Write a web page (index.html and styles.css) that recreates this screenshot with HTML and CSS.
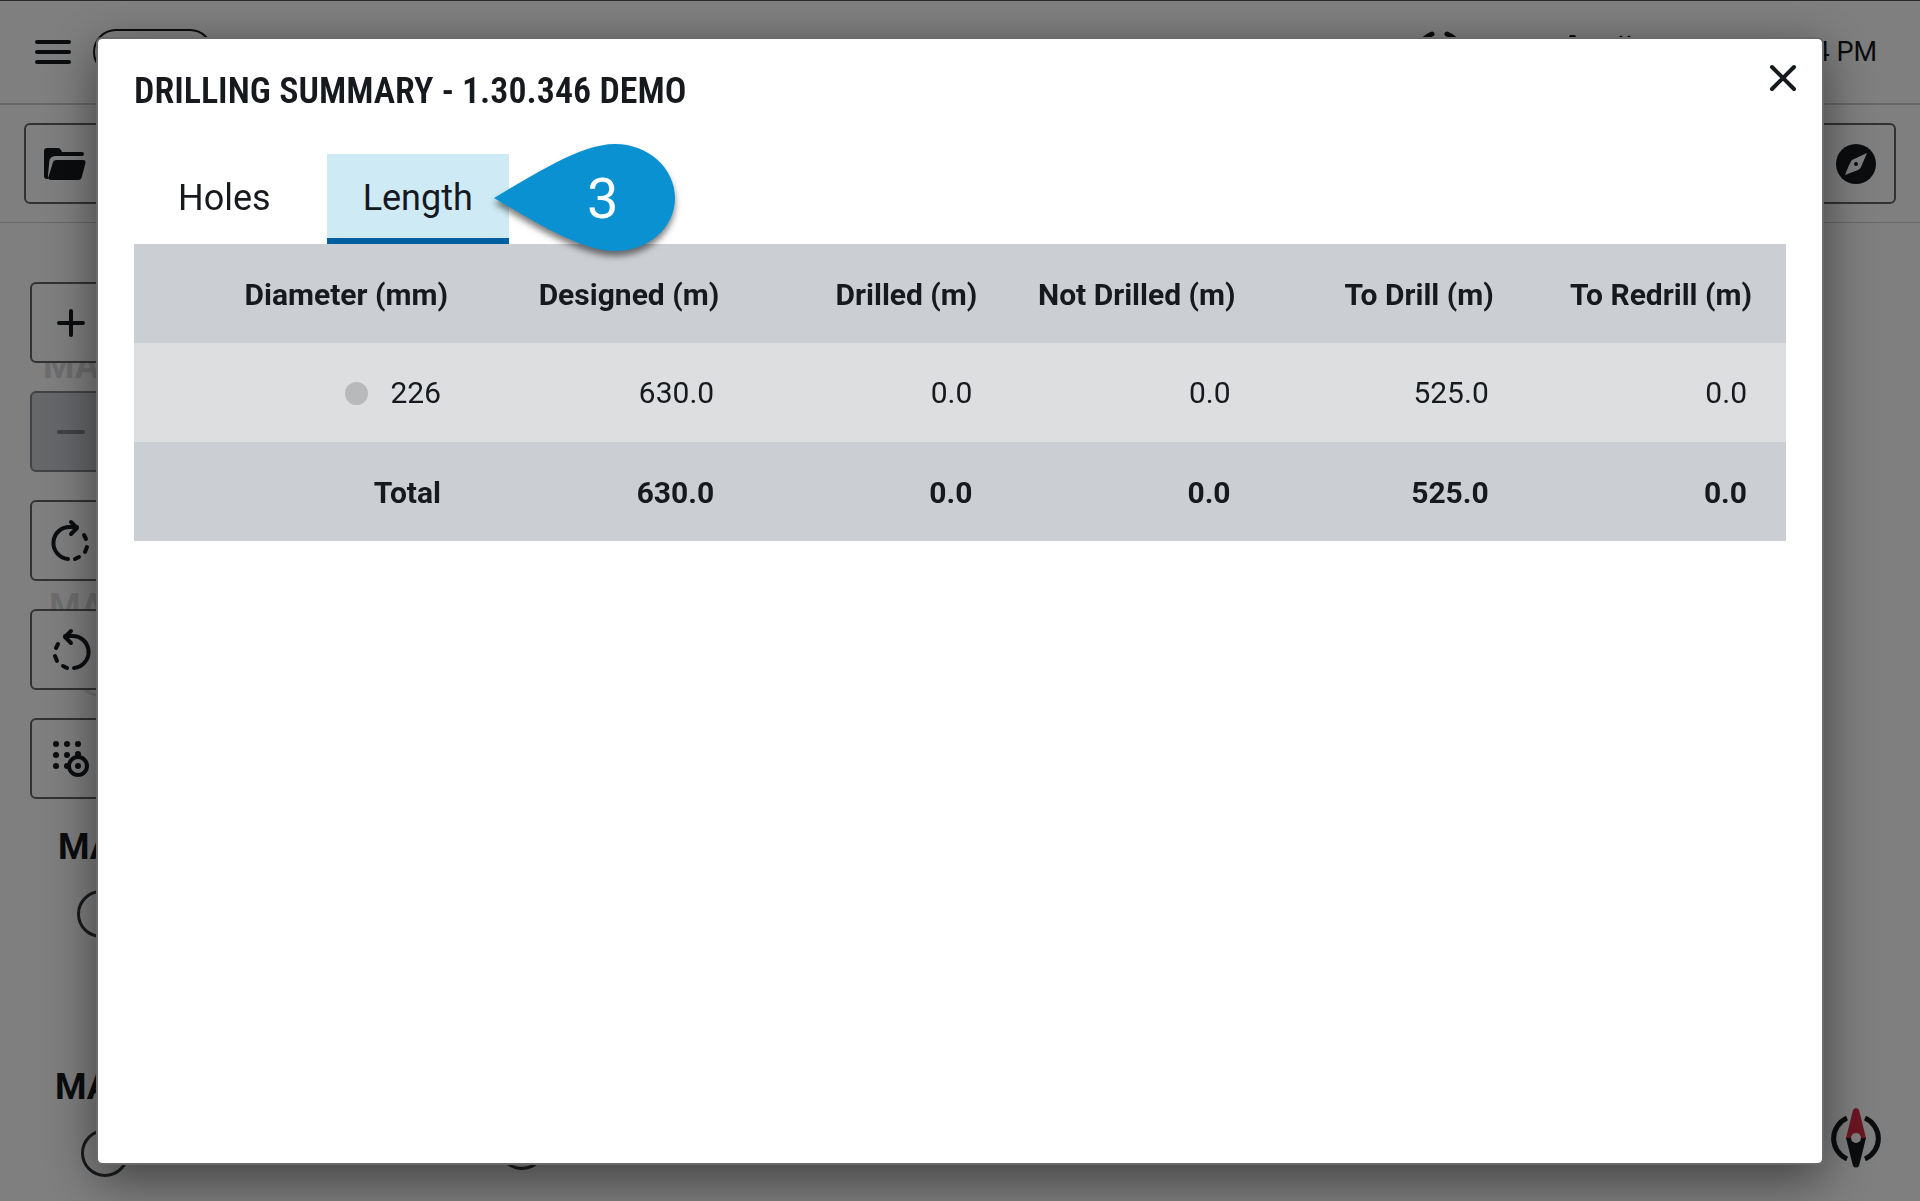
FILE: index.html
```html
<!DOCTYPE html>
<html lang="en">
<head>
<meta charset="utf-8">
<title>Drilling summary</title>
<link rel="stylesheet" href="styles.css">
</head>
<body>
<div class="app">
  <header class="topbar">
    <button class="icon-button" aria-label="Menu">
      <svg width="36" height="24" viewBox="0 0 36 24" stroke="currentColor" stroke-width="4" stroke-linecap="round"><path d="M2 2h32M2 12h32M2 22h32"/></svg>
    </button>
    <button class="pill" aria-label="Status"></button>
    <div class="status">
      <svg width="210" height="48" viewBox="0 0 210 48" fill="none" stroke="currentColor" stroke-width="5" stroke-linecap="round">
        <path d="M11 6Q6 8 3 11M26 6Q31 8 34 11M3 35q3 5 8 7M34 35q-3 5-8 7"/>
        <path d="M150 9h3v30" stroke-width="4" stroke-linejoin="round"/>
        <path d="M200 9v22M208 9v22" stroke-width="3"/>
      </svg>
      <span class="clock">4 PM</span>
    </div>
  </header>
  <div class="toolbar">
    <button class="tool" aria-label="Open">
      <svg width="42" height="34" viewBox="0 0 42 34" fill="currentColor"><path d="M0 4Q0 1 3 1h11q2 0 3 2l1 2h20q2 0 2 2t-2 2H12Q7 9 5.500 13L4 28Q4 30 5 32H3Q0 32 0 29z"/><path d="M9 15q1-2 3-2h27q3 0 2.500 3l-4 15q-1 2-3 2H7q-3 0-2.500-3z"/></svg>
    </button>
    <button class="tool" aria-label="Compass">
      <svg width="40" height="40" viewBox="0 0 40 40"><circle cx="20" cy="20" r="20" fill="currentColor"/><path d="M31 9 25 23Q24 25 22 26L9 31Q14 18 16 16z" fill="#fff"/><circle cx="20" cy="20" r="2" fill="currentColor"/></svg>
    </button>
  </div>
  <main class="workspace">
    <div class="map">
      <span class="label faded" style="left:43px;top:122px">MA</span>
      <span class="label faded" style="left:49px;top:363px">MA</span>
      <span class="ring faded" style="left:76px;top:426px"></span>
      <span class="label" style="left:58px;top:603px">MA</span>
      <span class="ring" style="left:77px;top:667px"></span>
      <span class="label" style="left:55px;top:843px">MA</span>
      <span class="ring" style="left:81px;top:906px"></span>
      <span class="ring" style="left:498px;top:899px"></span>
    </div>
    <nav class="side">
      <button class="tool" aria-label="Zoom in"><svg width="28" height="28" viewBox="0 0 28 28" stroke="currentColor" stroke-width="4" stroke-linecap="round"><path d="M2 14h24M14 2v24"/></svg></button>
      <button class="tool" aria-label="Zoom out" disabled><svg width="28" height="28" viewBox="0 0 28 28" stroke="currentColor" stroke-width="4" stroke-linecap="round"><path d="M2 14h24"/></svg></button>
      <button class="tool" aria-label="Rotate right"><svg width="36" height="42" viewBox="0 0 36 42" fill="none" stroke="currentColor" stroke-width="4" stroke-linecap="round" stroke-linejoin="round"><path d="M15 39A16 16 0 0 1 18 7h6M18 2l6 6-6 6M31 15l2 4M34 27l-2 5M26 37l-4 2"/></svg></button>
      <button class="tool" aria-label="Rotate left"><svg width="36" height="42" viewBox="0 0 36 42" fill="none" stroke="currentColor" stroke-width="4" stroke-linecap="round" stroke-linejoin="round"><path d="M21 39A16 16 0 0 0 18 7h-6M18 2l-6 6 6 6M5 15l-2 4M2 27l2 5M10 37l4 2"/></svg></button>
      <button class="tool" aria-label="Snap to hole"><svg width="36" height="36" viewBox="0 0 36 36" fill="currentColor"><circle cx="3" cy="3" r="3"/><circle cx="14" cy="3" r="3"/><circle cx="25" cy="3" r="3"/><circle cx="3" cy="14" r="3"/><circle cx="14" cy="14" r="3"/><circle cx="25" cy="13" r="3"/><circle cx="3" cy="25" r="3"/><circle cx="14" cy="25" r="3"/><circle cx="25" cy="25" r="3"/><circle cx="25" cy="25" r="9" fill="none" stroke="currentColor" stroke-width="4"/></svg></button>
    </nav>
    <svg class="north" width="50" height="62" viewBox="0 0 50 62"><path d="M16 11A22.400 22.400 0 0 0 16 52M34 11A22.400 22.400 0 0 1 34 52" fill="none" stroke="#16191d" stroke-width="5"/><path d="M22 3Q25-1 28 3L35 31H15z" fill="#d62c43" /><path d="M15 31H35L28 59Q25 62 22 59z" fill="#16191d"/><circle cx="25" cy="31" r="5" fill="#fff"/></svg>
  </main>
</div>

<div class="backdrop">
  <section class="dialog" role="dialog" aria-labelledby="dialog-title">
    <div class="dialog-head">
      <h1 id="dialog-title">DRILLING SUMMARY - 1.30.346 DEMO</h1>
      <button class="icon-button" aria-label="Close">
        <svg width="26" height="26" viewBox="0 0 26 26" stroke="currentColor" stroke-width="4" stroke-linecap="round"><path d="M2 2l22 22M24 2 2 24"/></svg>
      </button>
    </div>
    <div class="tabs" role="tablist">
      <button class="tab" role="tab">Holes</button>
      <div class="tab-anchor">
        <button class="tab active" role="tab" aria-selected="true">Length</button>
        <div class="callout">
          <svg width="182" height="108" viewBox="0 0 182 108"><path d="M0 54C38 32 86 0 121 0C154 0 181 24 181 54S154 107 121 107C86 107 38 76 0 54z" fill="#0a91d1"/></svg>
          <span>3</span>
        </div>
      </div>
    </div>
    <table>
      <colgroup><col class="wide"><col><col><col><col><col></colgroup>
      <thead><tr><th>Diameter (mm)</th><th>Designed (m)</th><th>Drilled (m)</th><th>Not Drilled (m)</th><th>To Drill (m)</th><th>To Redrill (m)</th></tr></thead>
      <tbody><tr><td><span class="dot"></span>226</td><td>630.0</td><td>0.0</td><td>0.0</td><td>525.0</td><td>0.0</td></tr></tbody>
      <tfoot><tr><td>Total</td><td>630.0</td><td>0.0</td><td>0.0</td><td>525.0</td><td>0.0</td></tr></tfoot>
    </table>
  </section>
</div>
</body>
</html>
```
FILE: styles.css
```css
* { box-sizing: border-box; }

body {
  margin: 0;
  font-family: Roboto, "Liberation Sans", sans-serif;
  color: #16191d;
  background: #fff;
}

button {
  font: inherit;
  color: inherit;
  background: none;
  border: 0;
  padding: 0;
}

svg {
  display: block;
  overflow: visible;
}

.app {
  display: flex;
  flex-direction: column;
  height: 100vh;
  overflow: hidden;
  border-top: 1px solid #555;
}

.topbar {
  display: flex;
  align-items: center;
  gap: 22px;
  height: 104px;
  padding: 0 43px 0 35px;
  border-bottom: 2px solid #cecece;
}

.pill {
  width: 120px;
  height: 46px;
  border: 2px solid #16191d;
  border-radius: 24px;
}

.status {
  display: flex;
  align-items: center;
  gap: 184px;
  margin-left: auto;
}

.clock { font-size: 27px; }

.toolbar {
  display: flex;
  justify-content: space-between;
  padding: 18px 24px;
  border-bottom: 1px solid #cecece;
}

.tool {
  display: grid;
  place-items: center;
  width: 81px;
  height: 81px;
  border: 2px solid #646464;
  border-radius: 6px;
  background: #fff;
}

.workspace {
  position: relative;
  flex: 1;
  padding: 59px 30px;
}

.side {
  position: relative;
  display: flex;
  flex-direction: column;
  gap: 28px;
}

.side .tool { background: rgba(255, 255, 255, 0.9); }

.side .tool:disabled {
  background: #cbced3;
  border-color: #82858a;
  color: #82858a;
}

.map .label,
.map .ring { position: absolute; }

.label {
  font-size: 36px;
  line-height: 42px;
  font-weight: 700;
}

.ring {
  width: 48px;
  height: 48px;
  border: 3px solid #33363a;
  border-radius: 50%;
}

.faded { opacity: 0.15; }

.north {
  position: absolute;
  right: 39px;
  bottom: 32px;
}

.backdrop {
  position: fixed;
  inset: 0;
  display: flex;
  padding: 37px 96px 36px;
  background: rgba(0, 0, 0, 0.5);
}

.dialog {
  flex: 1;
  padding: 26px 36px;
  background: #fff;
  background-clip: padding-box;
  border: 2px solid #6a6a6a;
  border-radius: 6px;
  box-shadow: 0 14px 50px rgba(0, 0, 0, 0.5);
}

.dialog-head {
  display: flex;
  align-items: flex-start;
  justify-content: space-between;
  margin-right: -10px;
}

h1 {
  margin: 0;
  padding-top: 5px;
  font-family: "Roboto Condensed", Roboto, sans-serif;
  font-size: 36px;
  line-height: 42px;
  font-weight: 600;
}

.tabs {
  display: flex;
  gap: 20px;
  margin-top: 42px;
  padding-left: 8px;
}

.tab {
  height: 90px;
  padding: 4px 36px 0;
  border-bottom: 6px solid transparent;
  font-size: 36px;
  line-height: 80px;
}

.tab.active {
  background: #ceebf5;
  border-color: #005f9e;
}

.tab-anchor { position: relative; }

.callout {
  position: absolute;
  left: 167px;
  top: -10px;
  color: #fff;
  filter: drop-shadow(0 5px 3px rgba(0, 0, 0, 0.5));
}

.callout span {
  position: absolute;
  inset: 0 0 0 36px;
  font-size: 56px;
  line-height: 110px;
  text-align: center;
}

table {
  width: 100%;
  table-layout: fixed;
  border-collapse: collapse;
  font-size: 30px;
  text-align: right;
  font-variant-numeric: tabular-nums;
}

col.wide { width: 361px; }

tr { height: 99px; background: #cbced3; }
tbody tr { background: #dddee0; }

th, td { padding: 0 39px 0 0; }
th { padding: 1px 34px 0 0; text-align: right; font-weight: 700; }
td:first-child { padding-right: 54px; }
th:first-child { padding-right: 47px; }
tfoot td { padding-top: 1px; font-weight: 700; }

.dot {
  display: inline-block;
  width: 23px;
  height: 23px;
  margin-right: 22px;
  border-radius: 50%;
  background: #b8b9bb;
  vertical-align: -2px;
}
```
